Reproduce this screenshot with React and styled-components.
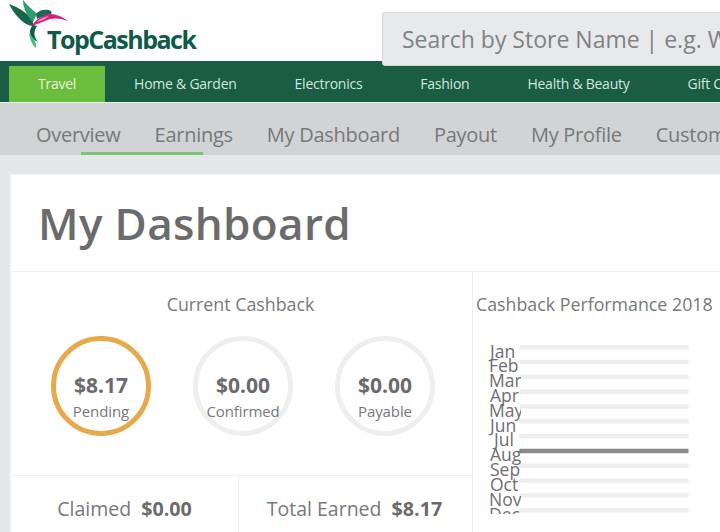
import React from 'react';
import styled, { createGlobalStyle } from 'styled-components';

const Global = createGlobalStyle`
  html, body { margin: 0; padding: 0; width: 720px; height: 532px; overflow: hidden; background: #e6e7e8; }
  body { font-family: "Open Sans", "Liberation Sans", sans-serif; color: #6d6e71; }
  * { box-sizing: border-box; }
`;

const Page = styled.div`
  width: 720px;
  height: 532px;
  overflow: hidden;
  display: flex;
  flex-direction: column;
`;
const Header = styled.header`
  height: 61px;
  flex: none;
  background: #fff;
  display: flex;
  align-items: flex-start;
`;
const Logo = styled.div`
  position: relative;
  width: 382px;
  height: 61px;
  flex: none;
  padding: 23px 0 0 47px;
`;
const BirdSvg = styled.svg`
  position: absolute;
  left: 0;
  top: 0;
`;
const LogoText = styled.span`
  display: block;
  font-size: 25px;
  line-height: 32px;
  font-weight: 700;
  letter-spacing: -1.5px;
  color: #0f5a48;
  white-space: nowrap;
`;
const Search = styled.div`
  position: relative;
  z-index: 2;
  flex: none;
  width: 400px;
  height: 54px;
  margin-top: 12px;
  padding-left: 19px;
  background: #e8e9eb;
  border: 1px solid #d5d6d8;
  border-radius: 3px 0 0 3px;
  font-size: 23px;
  line-height: 53px;
  color: #808285;
  white-space: nowrap;
`;
const Nav = styled.nav`
  height: 41px;
  flex: none;
  background: #1a5c44;
  display: flex;
  align-items: flex-end;
  padding-left: 9px;
`;
const NavItem = styled.div`
  height: 36px;
  padding: 0 29px;
  flex: none;
  font-size: 14px;
  letter-spacing: -0.25px;
  line-height: 36px;
  white-space: nowrap;
  color: ${p => (p.$active ? '#e6f2d8' : '#cfe8dc')};
  background: ${p => (p.$active ? '#6bbd3e' : 'transparent')};
`;
const SubNav = styled.div`
  position: relative;
  height: 53px;
  flex: none;
  background: #d1d3d4;
  border-top: 1px solid #e9eaeb;
  display: flex;
  gap: 34px;
  padding-left: 36px;
`;
const SubItem = styled.div`
  flex: none;
  font-size: 20px;
  letter-spacing: -0.27px;
  line-height: 63px;
  height: 52px;
  color: #77787b;
  white-space: nowrap;
`;
const Underline = styled.div`
  position: absolute;
  left: 81px;
  bottom: 0;
  width: 122px;
  height: 3px;
  background: #7cc576;
`;
const Main = styled.main`
  flex: 1;
  padding: 19px 0 0 10px;
  min-height: 0;
`;
const Card = styled.section`
  width: 760px;
  height: 400px;
  background: #fff;
  border: 1px solid #f4f4f5;
  border-right: none;
`;
const Title = styled.h1`
  margin: 0;
  height: 97px;
  padding-left: 27px;
  font-size: 44px;
  letter-spacing: 0.35px;
  line-height: 96px;
  font-weight: 600;
  color: #6b6b6c;
  border-bottom: 1px solid #eeeff0;
`;
const Columns = styled.div`
  display: flex;
  height: 302px;
`;
const Left = styled.div`
  width: 462px;
  flex: none;
  border-right: 1px solid #eeeff0;
  display: flex;
  flex-direction: column;
`;
const Heading = styled.h2`
  margin: 0;
  font-size: 17.8px;
  font-weight: 400;
  line-height: 24px;
  color: #77787b;
  white-space: nowrap;
`;
const CurrentHeading = styled(Heading)`
  text-align: center;
  padding-top: 20px;
  padding-right: 2px;
`;
const Circles = styled.div`
  display: flex;
  gap: 42px;
  padding: 20px 0 0 40px;
  height: 159px;
  flex: none;
`;
const Circle = styled.div`
  width: 100px;
  height: 100px;
  flex: none;
  border-radius: 50%;
  border: 5px solid ${p => (p.$active ? '#e8a84c' : '#eeeeef')};
  display: flex;
  flex-direction: column;
  align-items: center;
  padding-top: 30px;
`;
const Amount = styled.div`
  font-size: 21px;
  line-height: 28px;
  font-weight: 700;
  color: #6b6b6c;
`;
const Label = styled.div`
  font-size: 15px;
  letter-spacing: -0.1px;
  line-height: 24px;
  color: #77787b;
  white-space: nowrap;
`;
const Totals = styled.div`
  flex: 1;
  display: flex;
  border-top: 1px solid #eeeff0;
`;
const Total = styled.div`
  flex: ${p => (p.$wide ? 1 : 'none')};
  width: ${p => (p.$wide ? 'auto' : '228px')};
  border-right: ${p => (p.$wide ? 'none' : '1px solid #eeeff0')};
  padding: 20px ${p => (p.$wide ? '2px' : '0')} 0 0;
  text-align: center;
  font-size: 19.5px;
  line-height: 26px;
  color: #77787b;
  white-space: nowrap;
`;
const Strong = styled.b`
  font-size: 19.7px;
  font-weight: 700;
  margin-left: 5px;
  color: #6b6b6c;
`;
const Right = styled.div`
  flex: 1;
  padding: 20px 0 0 3px;
`;
const ChartSvg = styled.svg`
  display: block;
  margin-top: 24px;
`;
const ChartLabel = styled.text`
  font-family: "Open Sans", "Liberation Sans", sans-serif;
  font-size: 17.5px;
  fill: #6d6e71;
`;

const months = [['Jan', 14], ['Feb', 13], ['Mar', 13], ['Apr', 14], ['May', 13], ['Jun', 14], ['Jul', 18], ['Aug', 14], ['Sep', 14], ['Oct', 14], ['Nov', 13], ['Dec', 13]];

function Bird() {
  return (
    <BirdSvg width="72" height="54" viewBox="0 0 72 54">
      <path d="M9 4 C15 6 27 12 33 20 L33 26 C24 26 14 14 9 4 Z" fill="#17654a" />
      <path d="M23 0 C27 5 33 10 37 14 L33 22 C27 16 23 8 23 0 Z" fill="#2f9e6e" />
      <path d="M36 14 C39 10 44 9 49 10 C52 11 52 13 51 14 C46 15 41 17 37 19 Z" fill="#1a6b52" />
      <path d="M32 26 C35 20 42 15 50 14 C56 14 63 17 68 21 C60 18 55 18 50 19 C44 21 38 24 32 26 Z" fill="#d91e82" />
      <path d="M36 22 C40 19 44 17 49 16 C46 19 41 21 36 22 Z" fill="#f7a1cb" />
      <path d="M33 25 C28 30 29 38 38 42 C34 37 33 32 37 26 Z" fill="#125a44" />
      <path d="M29 33 C30 39 32 45 36 48 C37 44 34 38 29 33 Z" fill="#35c46a" />
    </BirdSvg>
  );
}

export default function App() {
  return (
    <Page>
      <Global />
      <Header>
        <Logo>
          <Bird />
          <LogoText>TopCashback</LogoText>
        </Logo>
        <Search>Search by Store Name | e.g. Walmart</Search>
      </Header>
      <Nav>
        <NavItem $active>Travel</NavItem>
        <NavItem>Home &amp; Garden</NavItem>
        <NavItem>Electronics</NavItem>
        <NavItem>Fashion</NavItem>
        <NavItem>Health &amp; Beauty</NavItem>
        <NavItem>Gift Cards</NavItem>
      </Nav>
      <SubNav>
        <SubItem>Overview</SubItem>
        <SubItem>Earnings</SubItem>
        <SubItem>My Dashboard</SubItem>
        <SubItem>Payout</SubItem>
        <SubItem>My Profile</SubItem>
        <SubItem>Customer Service</SubItem>
        <Underline />
      </SubNav>
      <Main>
        <Card>
          <Title>My Dashboard</Title>
          <Columns>
            <Left>
              <CurrentHeading>Current Cashback</CurrentHeading>
              <Circles>
                <Circle $active><Amount>$8.17</Amount><Label>Pending</Label></Circle>
                <Circle><Amount>$0.00</Amount><Label>Confirmed</Label></Circle>
                <Circle><Amount>$0.00</Amount><Label>Payable</Label></Circle>
              </Circles>
              <Totals>
                <Total>Claimed <Strong>$0.00</Strong></Total>
                <Total $wide>Total Earned <Strong>$8.17</Strong></Total>
              </Totals>
            </Left>
            <Right>
              <Heading>Cashback Performance 2018</Heading>
              <ChartSvg width="240" height="174" viewBox="0 0 240 174">
                <defs>
                  <clipPath id="labels"><rect x="0" y="0" width="45" height="174" /></clipPath>
                </defs>
                {months.map(([m], i) => (
                  <rect key={m} x="43.5" y={5 + i * 14.82} width="169" height="4.5" fill={m === 'Aug' ? '#8a8a8c' : '#eeeeef'} />
                ))}
                <g clipPath="url(#labels)">
                  {months.map(([m, x], i) => (
                    <ChartLabel key={m} x={x} y={17.5 + i * 14.82}>{m}</ChartLabel>
                  ))}
                </g>
              </ChartSvg>
            </Right>
          </Columns>
        </Card>
      </Main>
    </Page>
  );
}
